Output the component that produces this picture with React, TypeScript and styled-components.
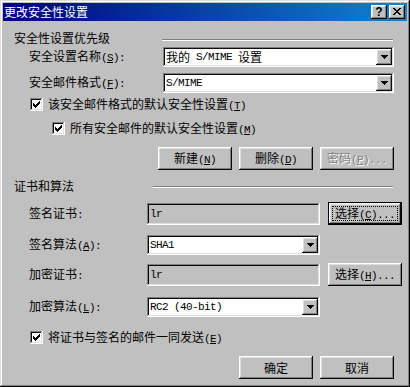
import React from "react";
import styled, { createGlobalStyle, css } from "styled-components";

const GlobalStyle = createGlobalStyle`
  html, body { margin: 0; padding: 0; background: #c0c0c0; }
  body { font-family: "Noto Sans CJK SC", "Liberation Sans", sans-serif; font-size: 12px; }
  * { box-sizing: border-box; }
`;

const raised = css`
  box-shadow: inset -1px -1px #0a0a0a, inset 1px 1px #ffffff, inset -2px -2px #808080, inset 2px 2px #dfdfdf;
`;
const sunken = css`
  box-shadow: inset -1px -1px #ffffff, inset 1px 1px #808080, inset -2px -2px #dfdfdf, inset 2px 2px #0a0a0a;
`;

const Window = styled.div`
  width: 410px;
  height: 387px;
  padding: 3px;
  background: #c0c0c0;
  box-shadow: inset -1px -1px #0a0a0a, inset 1px 1px #dfdfdf, inset -2px -2px #808080, inset 2px 2px #ffffff;
  display: flex;
  flex-direction: column;
  color: #000;
  font-family: "Noto Sans CJK SC", sans-serif;
  font-size: 12px;
  line-height: 14px;
`;

const TitleBar = styled.div`
  height: 18px;
  display: flex;
  align-items: center;
  justify-content: space-between;
  padding: 0 2px 0 1px;
  background: linear-gradient(90deg, #000080, #1084d0);
`;

const Title = styled.span`
  color: #fff;
  font-size: 12px;
  line-height: 14px;
  white-space: nowrap;
`;

const CaptionButtons = styled.div`
  display: flex;
  gap: 2px;
`;

const CaptionButton = styled.div`
  width: 16px;
  height: 14px;
  background: #c0c0c0;
  ${raised};
  display: flex;
  align-items: center;
  justify-content: center;
  padding-bottom: 1px;
  font-family: "Liberation Sans", sans-serif;
  font-weight: bold;
  font-size: 12px;
  line-height: 12px;
`;

const Body = styled.div`
  display: flex;
  flex-direction: column;
  padding: 0 13px 0 11px;
`;

const SectionHeader = styled.div<{ $lineStart: number; $mt: number; $lineOffset: number }>`
  display: grid;
  grid-template-columns: ${(p) => p.$lineStart}px 1fr;
  align-items: start;
  height: 14px;
  margin-top: ${(p) => p.$mt}px;
  & > hr {
    margin: ${(p) => p.$lineOffset}px 1px 0 0;
  }
`;

const Etch = styled.hr`
  height: 2px;
  border: none;
  border-top: 1px solid #808080;
  border-bottom: 1px solid #ffffff;
`;

const FormRow = styled.div<{ $cols: string; $mt: number }>`
  display: grid;
  grid-template-columns: ${(p) => p.$cols};
  column-gap: 8px;
  align-items: center;
  padding-left: 15px;
  margin-top: ${(p) => p.$mt}px;
`;

const Label = styled.span`
  white-space: nowrap;
`;

const Field = styled.div<{ $readonly?: boolean; $h: number }>`
  height: ${(p) => p.$h}px;
  padding: 2px;
  background: ${(p) => (p.$readonly ? "#c0c0c0" : "#ffffff")};
  ${sunken};
  display: flex;
  align-items: stretch;
`;

const FieldText = styled.div`
  flex: 1;
  display: flex;
  align-items: center;
  padding-left: 1px;
  white-space: pre;
  overflow: hidden;
`;

/* half-width Latin, as the dialog's bitmap font draws it (6px per character) */
const Latin = styled.span`
  font-family: "Liberation Mono", monospace;
  font-size: 11px;
  letter-spacing: -0.6px;
  white-space: pre;
`;

const DropButton = styled.div`
  width: 16px;
  background: #c0c0c0;
  ${raised};
  display: flex;
  align-items: center;
  justify-content: center;
`;

const CheckRow = styled.div<{ $indent: number; $mt: number }>`
  display: flex;
  align-items: center;
  gap: 5px;
  height: 13px;
  padding-left: ${(p) => p.$indent}px;
  margin-top: ${(p) => p.$mt}px;
  white-space: nowrap;
`;

const CheckBox = styled.span`
  width: 13px;
  height: 13px;
  flex: none;
  background: #fff;
  ${sunken};
  display: flex;
  align-items: center;
  justify-content: center;
`;

const ButtonRow = styled.div<{ $mt: number }>`
  display: flex;
  justify-content: flex-end;
  gap: 7px;
  margin-top: ${(p) => p.$mt}px;
`;

const Button = styled.button<{ $focused?: boolean }>`
  width: 74px;
  height: 23px;
  padding: 0;
  margin: 0;
  border: none;
  background: #c0c0c0;
  ${raised};
  font-family: "Noto Sans CJK SC", sans-serif;
  font-size: 12px;
  line-height: 14px;
  color: #000;
  white-space: nowrap;
  &:disabled {
    color: #808080;
    text-shadow: 1px 1px 0 #ffffff;
  }
  ${(p) =>
    p.$focused &&
    css`
      box-shadow: inset 0 0 0 1px #000, inset -2px -2px #0a0a0a, inset 2px 2px #ffffff,
        inset -3px -3px #808080, inset 3px 3px #dfdfdf;
      outline: 1px dotted #000;
      outline-offset: -5px;
    `}
`;

const px = (rows: [number, number, number][]) =>
  rows.map(([x, y, w]) => `M${x} ${y}h${w}v1h-${w}z`).join("");

const CheckMark = () => (
  <svg width="7" height="7" viewBox="0 0 7 7" shapeRendering="crispEdges">
    <path
      fill="#000"
      d={px([
        [6, 0, 1],
        [5, 1, 2],
        [0, 2, 1],
        [4, 2, 3],
        [0, 3, 2],
        [3, 3, 3],
        [0, 4, 5],
        [1, 5, 3],
        [2, 6, 1],
      ])}
    />
  </svg>
);

const DownArrow = () => (
  <svg width="7" height="4" viewBox="0 0 7 4" shapeRendering="crispEdges">
    <path fill="#000" d={px([[0, 0, 7], [1, 1, 5], [2, 2, 3], [3, 3, 1]])} />
  </svg>
);

const CloseGlyph = () => (
  <svg width="8" height="7" viewBox="0 0 8 7" shapeRendering="crispEdges">
    <path
      fill="#000"
      d={px([
        [0, 0, 2],
        [6, 0, 2],
        [1, 1, 2],
        [5, 1, 2],
        [2, 2, 4],
        [3, 3, 2],
        [2, 4, 4],
        [1, 5, 2],
        [5, 5, 2],
        [0, 6, 2],
        [6, 6, 2],
      ])}
    />
  </svg>
);

const Key: React.FC<{ k: string; colon?: boolean; dots?: boolean }> = ({ k, colon, dots }) => (
  <Latin>
    {"("}
    <u>{k}</u>
    {")"}
    {colon ? ":" : ""}
    {dots ? "..." : ""}
  </Latin>
);

const Combo: React.FC<{ children: React.ReactNode }> = ({ children }) => (
  <Field $h={20}>
    <FieldText>{children}</FieldText>
    <DropButton>
      <DownArrow />
    </DropButton>
  </Field>
);

const Check: React.FC<{ indent: number; mt: number; children: React.ReactNode }> = ({
  indent,
  mt,
  children,
}) => (
  <CheckRow $indent={indent} $mt={mt}>
    <CheckBox>
      <CheckMark />
    </CheckBox>
    <span>{children}</span>
  </CheckRow>
);

const SEC1 = "126px 1fr";
const SEC2 = "110px 173px 74px";

export default function App() {
  return (
    <>
      <GlobalStyle />
      <Window>
        <TitleBar>
          <Title>更改安全性设置</Title>
          <CaptionButtons>
            <CaptionButton>?</CaptionButton>
            <CaptionButton>
              <CloseGlyph />
            </CaptionButton>
          </CaptionButtons>
        </TitleBar>
        <Body>
          <SectionHeader $lineStart={148} $mt={10} $lineOffset={8}>
            <Label>安全性设置优先级</Label>
            <Etch />
          </SectionHeader>
          <FormRow $cols={SEC1} $mt={2}>
            <Label>
              安全设置名称<Key k="S" colon />
            </Label>
            <Combo>
              我的<Latin> S/MIME </Latin>设置
            </Combo>
          </FormRow>
          <FormRow $cols={SEC1} $mt={6}>
            <Label>
              安全邮件格式<Key k="F" colon />
            </Label>
            <Combo>
              <Latin>S/MIME</Latin>
            </Combo>
          </FormRow>
          <Check indent={16} mt={5}>
            该安全邮件格式的默认安全性设置<Key k="T" />
          </Check>
          <Check indent={38} mt={11}>
            所有安全邮件的默认安全性设置<Key k="M" />
          </Check>
          <ButtonRow $mt={12}>
            <Button>
              新建<Key k="N" />
            </Button>
            <Button>
              删除<Key k="D" />
            </Button>
            <Button disabled>
              密码<Key k="P" dots />
            </Button>
          </ButtonRow>

          <SectionHeader $lineStart={139} $mt={9} $lineOffset={7}>
            <Label>证书和算法</Label>
            <Etch />
          </SectionHeader>
          <FormRow $cols={SEC2} $mt={9}>
            <Label>
              签名证书<Latin>:</Latin>
            </Label>
            <Field $readonly $h={22}>
              <FieldText>
                <Latin>lr</Latin>
              </FieldText>
            </Field>
            <Button $focused>
              选择<Key k="C" dots />
            </Button>
          </FormRow>
          <FormRow $cols={SEC2} $mt={10}>
            <Label>
              签名算法<Key k="A" colon />
            </Label>
            <Combo>
              <Latin>SHA1</Latin>
            </Combo>
          </FormRow>
          <FormRow $cols={SEC2} $mt={8}>
            <Label>
              加密证书<Latin>:</Latin>
            </Label>
            <Field $readonly $h={22}>
              <FieldText>
                <Latin>lr</Latin>
              </FieldText>
            </Field>
            <Button>
              选择<Key k="H" dots />
            </Button>
          </FormRow>
          <FormRow $cols={SEC2} $mt={11}>
            <Label>
              加密算法<Key k="L" colon />
            </Label>
            <Combo>
              <Latin>RC2 (40-bit)</Latin>
            </Combo>
          </FormRow>
          <Check indent={16} mt={14}>
            将证书与签名的邮件一同发送<Key k="E" />
          </Check>
          <ButtonRow $mt={12}>
            <Button>确定</Button>
            <Button>取消</Button>
          </ButtonRow>
        </Body>
      </Window>
    </>
  );
}
